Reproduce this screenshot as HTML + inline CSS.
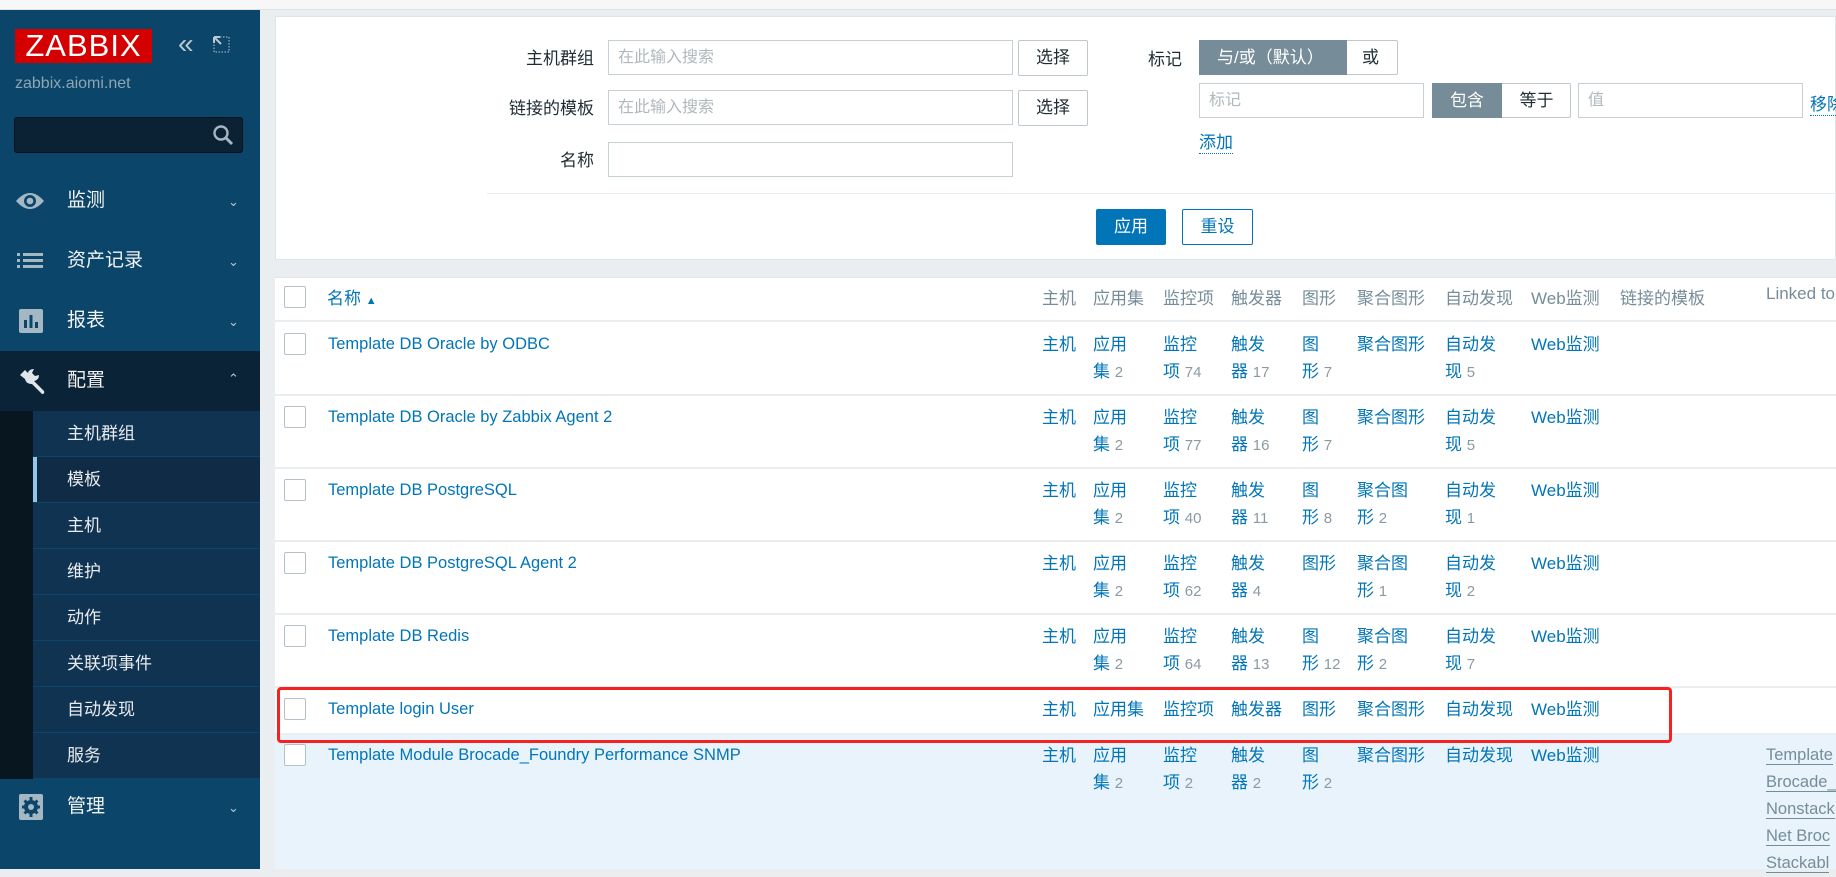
<!DOCTYPE html>
<html><head><meta charset="utf-8"><style>
*{margin:0;padding:0;box-sizing:border-box}
body{width:1836px;height:869px;overflow:hidden;background:#ebeef0;font-family:"Liberation Sans","Noto Sans CJK SC",sans-serif;font-size:16px;color:#1f2c33;position:relative}
.a{position:absolute;white-space:nowrap}
#top{left:0;top:0;width:1836px;height:10px;background:#f7f7f7;border-bottom:1px solid #e0e0e0}
#side{left:0;top:10px;width:260px;height:859px;background:#0b466a}
.mi{position:absolute;left:0;width:260px;color:#f2f2f2;font-size:19px}
.chev{position:absolute;left:228px;color:#b9c7d0;font-size:13px}
.sub{position:absolute;left:33px;width:227px;height:45px;background:#113352;color:#e8ecef;font-size:17px;line-height:45px;padding-left:34px}
.inp{position:absolute;background:#fff;border:1px solid #c6cfd4;height:35px;color:#b0b8bd;font-size:16px;line-height:33px;padding-left:9px}
.btn{position:absolute;border:1px solid #bfc8cd;border-radius:2px;background:#fff;height:36px;line-height:34px;text-align:center;font-size:17px}
.lnk{color:#0275b8}
.g{color:#8a9aa3;font-size:15px}
.cb{position:absolute;left:284px;width:22px;height:22px;border:1px solid #b6c1c7;border-radius:2px;background:#fff}
.row{position:absolute;left:275px;width:1561px;border-bottom:2px solid #ebeef0;background:#fff}
.c{position:absolute;line-height:27px;color:#0275b8;font-size:17px;white-space:nowrap}
.hd{position:absolute;top:284px;color:#768d99;font-size:17px;white-space:nowrap}
</style></head><body>
<div class="a" id="top"></div>
<div class="a" id="side">
 <div class="a" style="left:15px;top:19px;width:137px;height:34px;background:#d40000;color:#fff;font-size:31px;line-height:34px;text-align:center;letter-spacing:1px">ZABBIX</div>
 <div class="a" style="left:178px;top:18px;color:#b9c7d0;font-size:28px">«</div>
 <svg class="a" style="left:213px;top:25px" width="18" height="20" viewBox="0 0 18 20"><rect x="1" y="2" width="15" height="15" fill="none" stroke="#b9c7d0" stroke-dasharray="1.5 1.5"/><path d="M1 2 L8 9 M1 2 h6 M1 2 v6" stroke="#b9c7d0" stroke-width="2" fill="none"/></svg>
 <div class="a" style="left:15px;top:65px;color:#8ea5b3;font-size:16px">zabbix.aiomi.net</div>
 <div class="a" style="left:14px;top:107px;width:229px;height:36px;background:#0a2234;border:1px solid #06131d;border-radius:3px"></div>
 <svg class="a" style="left:212px;top:114px" width="22" height="22" viewBox="0 0 22 22"><circle cx="9" cy="9" r="6.5" stroke="#a4b6c1" stroke-width="2.4" fill="none"/><path d="M13.5 13.5 L20 20" stroke="#a4b6c1" stroke-width="3"/></svg>
 <div class="mi" style="top:166px;height:50px;line-height:50px"><svg class="a" style="left:15px;top:15px" width="30" height="20" viewBox="0 0 30 20"><path d="M1 10 Q15 -6 29 10 Q15 26 1 10Z" fill="#a4b8c4"/><circle cx="15" cy="10" r="6" fill="#0b466a"/><circle cx="15" cy="10" r="3.3" fill="#a4b8c4"/></svg><span style="position:absolute;left:67px">监测</span><span class="chev" style="top:1px">⌄</span></div>
 <div class="mi" style="top:226px;height:50px;line-height:50px"><svg class="a" style="left:17px;top:17px" width="26" height="16" viewBox="0 0 26 16"><g fill="#a4b8c4"><rect x="0" y="0" width="3" height="3"/><rect x="6" y="0" width="20" height="3"/><rect x="0" y="6" width="3" height="3"/><rect x="6" y="6" width="20" height="3"/><rect x="0" y="12" width="3" height="3"/><rect x="6" y="12" width="20" height="3"/></g></svg><span style="position:absolute;left:67px">资产记录</span><span class="chev" style="top:1px">⌄</span></div>
 <div class="mi" style="top:286px;height:50px;line-height:50px"><svg class="a" style="left:19px;top:13px" width="24" height="24" viewBox="0 0 24 24"><rect width="24" height="24" rx="2" fill="#a4b8c4"/><g fill="#0b466a"><rect x="5" y="11" width="3" height="8"/><rect x="10.5" y="6" width="3" height="13"/><rect x="16" y="13" width="3" height="6"/></g></svg><span style="position:absolute;left:67px">报表</span><span class="chev" style="top:1px">⌄</span></div>
 <div class="mi" style="top:341px;height:60px;line-height:60px;background:#0a2336"><svg class="a" style="left:17px;top:16px" width="30" height="30" viewBox="0 0 30 30"><path d="M3 8 L8 3 L11 6 Q12 2 17 2 L15 6 L18 9 L22 8 Q22 13 17 14 L27 24 Q28 27 25 27 L15 17 Q9 17 8 12 Z" fill="#dfe6ea"/></svg><span style="position:absolute;left:67px">配置</span><span class="chev" style="top:-2px">⌃</span></div>
 <div class="a" style="left:0;top:401px;width:33px;height:368px;background:#07161f"></div>
 <div class="sub" style="top:401px">主机群组</div>
 <div class="sub" style="top:447px;background:#0f2b45;border-left:4px solid #8fc7ef;padding-left:30px">模板</div>
 <div class="sub" style="top:493px">主机</div>
 <div class="sub" style="top:539px">维护</div>
 <div class="sub" style="top:585px">动作</div>
 <div class="sub" style="top:631px">关联项事件</div>
 <div class="sub" style="top:677px">自动发现</div>
 <div class="sub" style="top:723px">服务</div>
 <div class="mi" style="top:769px;height:56px;line-height:56px"><svg class="a" style="left:19px;top:15px" width="24" height="26" viewBox="0 0 24 26"><rect width="24" height="26" rx="2" fill="#a4b8c4"/><circle cx="12" cy="13" r="7" fill="#0b466a"/><g stroke="#0b466a" stroke-width="3"><path d="M12 3v20M3 13h18M5.5 6.5l13 13M18.5 6.5l-13 13"/></g><circle cx="12" cy="13" r="3" fill="#a4b8c4"/></svg><span style="position:absolute;left:67px">管理</span><span class="chev" style="top:1px">⌄</span></div>
</div>

<div class="a" style="left:275px;top:16px;width:1561px;height:244px;background:#fff;border:1px solid #dfe4e7"></div>
<div class="a" style="left:520px;top:44px;width:74px;text-align:right;font-size:17px">主机群组</div>
<div class="a" style="left:480px;top:94px;width:114px;text-align:right;font-size:17px">链接的模板</div>
<div class="a" style="left:520px;top:146px;width:74px;text-align:right;font-size:17px">名称</div>
<div class="inp" style="left:608px;top:40px;width:405px">在此输入搜索</div>
<div class="inp" style="left:608px;top:90px;width:405px">在此输入搜索</div>
<div class="inp" style="left:608px;top:142px;width:405px"></div>
<div class="btn" style="left:1018px;top:40px;width:70px">选择</div>
<div class="btn" style="left:1018px;top:90px;width:70px">选择</div>
<div class="a" style="left:1148px;top:45px;font-size:17px">标记</div>
<div class="a" style="left:1199px;top:40px;width:199px;height:35px;border:1px solid #bfc8cd;border-radius:2px;background:#fff"></div>
<div class="a" style="left:1199px;top:40px;width:148px;height:35px;background:#768d99;color:#fff;font-size:17px;line-height:35px;padding-left:18px">与/或（默认）</div>
<div class="a" style="left:1362px;top:40px;line-height:35px;font-size:17px">或</div>
<div class="inp" style="left:1199px;top:83px;width:225px">标记</div>
<div class="a" style="left:1432px;top:83px;width:139px;height:35px;border:1px solid #bfc8cd;border-radius:2px;background:#fff"></div>
<div class="a" style="left:1432px;top:83px;width:70px;height:35px;background:#768d99;color:#fff;font-size:17px;line-height:35px;text-align:center">包含</div>
<div class="a" style="left:1502px;top:83px;width:69px;line-height:35px;font-size:17px;text-align:center">等于</div>
<div class="inp" style="left:1578px;top:83px;width:225px">值</div>
<div class="a lnk" style="left:1810px;top:90px;font-size:17px;border-bottom:1px dotted #0275b8">移除</div>
<div class="a lnk" style="left:1199px;top:128px;font-size:17px;border-bottom:1px dotted #0275b8">添加</div>
<div class="a" style="left:487px;top:193px;width:1349px;height:1px;background:#e8ecee"></div>
<div class="btn" style="left:1096px;top:209px;width:70px;background:#0275b8;border-color:#0275b8;color:#fff">应用</div>
<div class="btn" style="left:1182px;top:209px;width:71px;border-color:#0275b8;color:#0275b8">重设</div>

<div class="a" style="left:275px;top:277px;width:1561px;height:592px;background:#fff;border-top:1px solid #dfe4e7"></div>
<div class="cb" style="top:286px"></div>
<div class="hd" style="left:327px;color:#0275b8">名称 <span style="font-size:11px">▲</span></div>
<div class="hd" style="left:1042px">主机</div><div class="hd" style="left:1093px">应用集</div><div class="hd" style="left:1163px">监控项</div><div class="hd" style="left:1231px">触发器</div><div class="hd" style="left:1302px">图形</div><div class="hd" style="left:1357px">聚合图形</div><div class="hd" style="left:1445px">自动发现</div><div class="hd" style="left:1531px">Web监测</div><div class="hd" style="left:1620px">链接的模板</div><div class="hd" style="left:1766px">Linked to</div>
<div class="a" style="left:275px;top:320px;width:1561px;height:2px;background:#ebeef0"></div>

<div class="row" style="top:322px;height:74px"></div>
<div class="row" style="top:396px;height:73px"></div>
<div class="row" style="top:469px;height:73px"></div>
<div class="row" style="top:542px;height:73px"></div>
<div class="row" style="top:615px;height:73px"></div>
<div class="row" style="top:688px;height:47px"></div>
<div class="a" style="left:275px;top:735px;width:1561px;height:134px;background:#e8f3fc"></div>

<div class="cb" style="top:333px"></div><div class="cb" style="top:406px"></div><div class="cb" style="top:479px"></div><div class="cb" style="top:552px"></div><div class="cb" style="top:625px"></div><div class="cb" style="top:698px"></div><div class="cb" style="top:744px"></div>

<div class="c" style="left:328px;top:331px;font-size:16.5px">Template DB Oracle by ODBC</div>
<div class="c" style="left:1042px;top:331px">主机</div><div class="c" style="left:1093px;top:331px">应用<br>集 <span class="g">2</span></div><div class="c" style="left:1163px;top:331px">监控<br>项 <span class="g">74</span></div><div class="c" style="left:1231px;top:331px">触发<br>器 <span class="g">17</span></div><div class="c" style="left:1302px;top:331px">图<br>形 <span class="g">7</span></div><div class="c" style="left:1357px;top:331px">聚合图形</div><div class="c" style="left:1445px;top:331px">自动发<br>现 <span class="g">5</span></div><div class="c" style="left:1531px;top:331px">Web监测</div>
<div class="c" style="left:328px;top:404px;font-size:16.5px">Template DB Oracle by Zabbix Agent 2</div>
<div class="c" style="left:1042px;top:404px">主机</div><div class="c" style="left:1093px;top:404px">应用<br>集 <span class="g">2</span></div><div class="c" style="left:1163px;top:404px">监控<br>项 <span class="g">77</span></div><div class="c" style="left:1231px;top:404px">触发<br>器 <span class="g">16</span></div><div class="c" style="left:1302px;top:404px">图<br>形 <span class="g">7</span></div><div class="c" style="left:1357px;top:404px">聚合图形</div><div class="c" style="left:1445px;top:404px">自动发<br>现 <span class="g">5</span></div><div class="c" style="left:1531px;top:404px">Web监测</div>
<div class="c" style="left:328px;top:477px;font-size:16.5px">Template DB PostgreSQL</div>
<div class="c" style="left:1042px;top:477px">主机</div><div class="c" style="left:1093px;top:477px">应用<br>集 <span class="g">2</span></div><div class="c" style="left:1163px;top:477px">监控<br>项 <span class="g">40</span></div><div class="c" style="left:1231px;top:477px">触发<br>器 <span class="g">11</span></div><div class="c" style="left:1302px;top:477px">图<br>形 <span class="g">8</span></div><div class="c" style="left:1357px;top:477px">聚合图<br>形 <span class="g">2</span></div><div class="c" style="left:1445px;top:477px">自动发<br>现 <span class="g">1</span></div><div class="c" style="left:1531px;top:477px">Web监测</div>
<div class="c" style="left:328px;top:550px;font-size:16.5px">Template DB PostgreSQL Agent 2</div>
<div class="c" style="left:1042px;top:550px">主机</div><div class="c" style="left:1093px;top:550px">应用<br>集 <span class="g">2</span></div><div class="c" style="left:1163px;top:550px">监控<br>项 <span class="g">62</span></div><div class="c" style="left:1231px;top:550px">触发<br>器 <span class="g">4</span></div><div class="c" style="left:1302px;top:550px">图形</div><div class="c" style="left:1357px;top:550px">聚合图<br>形 <span class="g">1</span></div><div class="c" style="left:1445px;top:550px">自动发<br>现 <span class="g">2</span></div><div class="c" style="left:1531px;top:550px">Web监测</div>
<div class="c" style="left:328px;top:623px;font-size:16.5px">Template DB Redis</div>
<div class="c" style="left:1042px;top:623px">主机</div><div class="c" style="left:1093px;top:623px">应用<br>集 <span class="g">2</span></div><div class="c" style="left:1163px;top:623px">监控<br>项 <span class="g">64</span></div><div class="c" style="left:1231px;top:623px">触发<br>器 <span class="g">13</span></div><div class="c" style="left:1302px;top:623px">图<br>形 <span class="g">12</span></div><div class="c" style="left:1357px;top:623px">聚合图<br>形 <span class="g">2</span></div><div class="c" style="left:1445px;top:623px">自动发<br>现 <span class="g">7</span></div><div class="c" style="left:1531px;top:623px">Web监测</div>
<div class="c" style="left:328px;top:696px;font-size:16.5px">Template login User</div>
<div class="c" style="left:1042px;top:696px">主机</div><div class="c" style="left:1093px;top:696px">应用集</div><div class="c" style="left:1163px;top:696px">监控项</div><div class="c" style="left:1231px;top:696px">触发器</div><div class="c" style="left:1302px;top:696px">图形</div><div class="c" style="left:1357px;top:696px">聚合图形</div><div class="c" style="left:1445px;top:696px">自动发现</div><div class="c" style="left:1531px;top:696px">Web监测</div>
<div class="c" style="left:328px;top:742px;font-size:16.5px">Template Module Brocade_Foundry Performance SNMP</div>
<div class="c" style="left:1042px;top:742px">主机</div><div class="c" style="left:1093px;top:742px">应用<br>集 <span class="g">2</span></div><div class="c" style="left:1163px;top:742px">监控<br>项 <span class="g">2</span></div><div class="c" style="left:1231px;top:742px">触发<br>器 <span class="g">2</span></div><div class="c" style="left:1302px;top:742px">图<br>形 <span class="g">2</span></div><div class="c" style="left:1357px;top:742px">聚合图形</div><div class="c" style="left:1445px;top:742px">自动发现</div><div class="c" style="left:1531px;top:742px">Web监测</div>
<div class="a" style="left:1766px;top:742px;line-height:27px;color:#768d99;font-size:16.5px">
<span style="border-bottom:1px solid #768d99">Template</span><br><span style="border-bottom:1px solid #768d99">Brocade_</span><br><span style="border-bottom:1px solid #768d99">Nonstack</span><br><span style="border-bottom:1px solid #768d99">Net Broc</span><br><span style="border-bottom:1px solid #768d99">Stackabl</span></div>

<div class="a" style="left:277px;top:687px;width:1395px;height:56px;border:3px solid #f5221f;border-radius:4px"></div>
</body></html>
